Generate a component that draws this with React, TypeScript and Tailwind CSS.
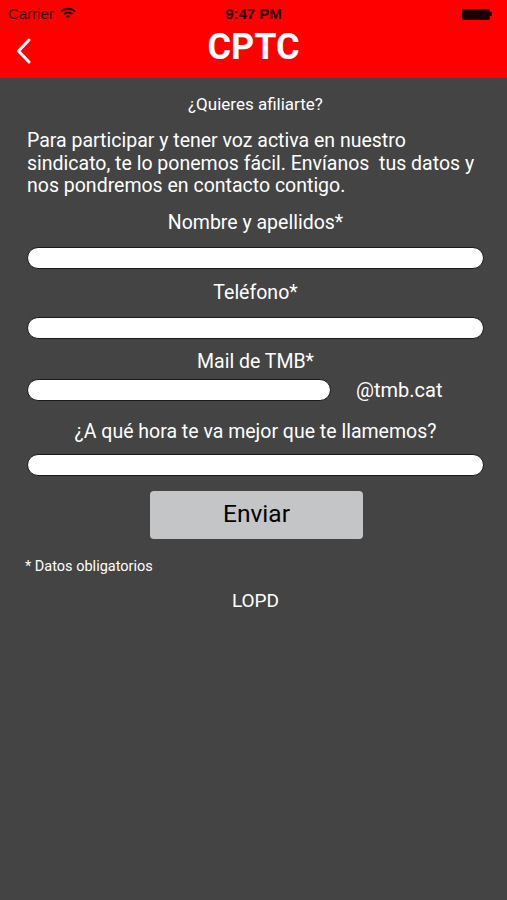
import React from 'react';

const Field: React.FC<{ className?: string }> = ({ className = 'w-full' }) => (
    <div className={`h-[22px] rounded-full bg-white border border-[#1a1a1a] ${className}`} />
);

const App: React.FC = () => {
    return (
        <div className="w-[507px] h-[900px] bg-[#444444] text-white" style={{ fontFamily: 'Roboto, "Liberation Sans", sans-serif' }}>
            {/* header */}
            <div className="bg-[#ff0000] h-[78px] flex flex-col">
                <div className="h-[28px] flex items-center px-2 text-[15px] text-[#2a0000] relative">
                    <span className="font-medium" style={{ fontFamily: '"Liberation Sans", sans-serif' }}>Carrier</span>
                    <svg width="16" height="12" viewBox="0 0 16 12" className="ml-[6px] -mt-[2px]">
                        <path d="M1 4.5 A10 10 0 0 1 15 4.5" stroke="#2a0000" strokeWidth="2" fill="none" />
                        <path d="M3.8 7.2 A6 6 0 0 1 12.2 7.2" stroke="#2a0000" strokeWidth="2" fill="none" />
                        <path d="M8 11.5 L5.8 9.3 A3 3 0 0 1 10.2 9.3 Z" fill="#2a0000" />
                    </svg>
                    <span className="absolute left-0 right-0 text-center font-bold" style={{ fontFamily: '"Liberation Sans", sans-serif' }}>9:47 PM</span>
                    <div className="ml-auto mr-[7px] flex items-center">
                        <div className="w-[28px] h-[11px] bg-[#1a0000] rounded-[2px]" />
                        <div className="w-[2px] h-[4px] bg-[#1a0000]" />
                    </div>
                </div>
                <div className="flex-1 flex items-center relative">
                    <svg width="18" height="26" viewBox="0 0 18 26" className="ml-[15px] -mt-[4px]">
                        <path d="M14 2 L3.5 13 L14 24" stroke="white" strokeWidth="3" fill="none" strokeLinecap="round" strokeLinejoin="round" />
                    </svg>
                    <span className="absolute left-0 right-0 top-[1px] text-center font-bold text-[36px] leading-[36px]">CPTC</span>
                </div>
            </div>

            {/* form */}
            <div className="pl-[27px] pr-[23px] pt-[16px] flex flex-col">
                <p className="text-center text-[17px] leading-[20px]">¿Quieres afiliarte?</p>
                <p className="mt-[16px] text-[19.5px] leading-[22.5px] whitespace-nowrap">
                    Para participar y tener voz activa en nuestro<br />
                    sindicato, te lo ponemos fácil. Envíanos&nbsp; tus datos y<br />
                    nos pondremos en contacto contigo.
                </p>
                <p className="mt-[13px] text-center text-[19.5px] leading-[24px]">Nombre y apellidos*</p>
                <div className="mt-[12px]"><Field /></div>
                <p className="mt-[12px] text-center text-[19.5px] leading-[24px]">Teléfono*</p>
                <div className="mt-[12px]"><Field /></div>
                <p className="mt-[11px] text-center text-[19.5px] leading-[24px]">Mail de TMB*</p>
                <div className="mt-[5px] flex items-center">
                    <Field className="w-[304px]" />
                    <span className="ml-[25px] text-[20px] leading-none">@tmb.cat</span>
                </div>
                <p className="mt-[19px] text-center text-[19.5px] leading-[24px]">¿A qué hora te va mejor que te llamemos?</p>
                <div className="mt-[10px]"><Field /></div>
                <button className="mt-[15px] self-center ml-[2px] w-[213px] h-[48px] bg-[#c4c5c6] rounded-[4px] text-black text-[24.5px]">
                    Enviar
                </button>
                <p className="mt-[19px] -ml-[2px] text-[14.5px] leading-[18px]">* Datos obligatorios</p>
                <p className="mt-[14px] text-center text-[19px] leading-[22px]">LOPD</p>
            </div>
        </div>
    );
};

export default App;
